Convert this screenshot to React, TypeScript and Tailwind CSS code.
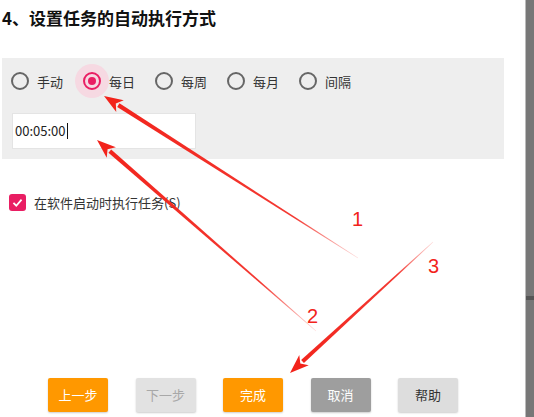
import React from 'react';

const font = { fontFamily: '"Noto Sans CJK SC", "Noto Sans", sans-serif' };

type ArrowProps = { id: string; tail: [number, number]; tip: [number, number]; width?: number };

const Arrow: React.FC<ArrowProps> = ({ id, tail, tip, width = 4.2 }) => {
  const [x1, y1] = tail;
  const [x2, y2] = tip;
  const len = Math.hypot(x2 - x1, y2 - y1);
  const dx = (x2 - x1) / len;
  const dy = (y2 - y1) / len;
  const nx = -dy;
  const ny = dx;
  const headLen = 17;
  const headHalf = 7;
  const bx = x2 - dx * headLen;
  const by = y2 - dy * headLen;
  const w = width / 2;
  const shaft = [
    [x1 + nx * 0.3, y1 + ny * 0.3],
    [bx + nx * w, by + ny * w],
    [bx - nx * w, by - ny * w],
    [x1 - nx * 0.3, y1 - ny * 0.3],
  ];
  const head = [
    [x2, y2],
    [bx + nx * headHalf - dx * 2, by + ny * headHalf - dy * 2],
    [bx + dx * 3, by + dy * 3],
    [bx - nx * headHalf - dx * 2, by - ny * headHalf - dy * 2],
  ];
  const pts = (p: number[][]) => p.map((q) => q.join(',')).join(' ');
  return (
    <>
      <defs>
        <linearGradient id={id} gradientUnits="userSpaceOnUse" x1={x1} y1={y1} x2={x2} y2={y2}>
          <stop offset="0" stopColor="#f2231b" stopOpacity="0.15" />
          <stop offset="0.25" stopColor="#f2231b" stopOpacity="0.9" />
          <stop offset="1" stopColor="#f2231b" stopOpacity="1" />
        </linearGradient>
      </defs>
      <polygon points={pts(shaft)} fill={`url(#${id})`} />
      <polygon points={pts(head)} fill="#f2231b" />
    </>
  );
};

const Radio: React.FC<{ label: string; checked?: boolean }> = ({ label, checked }) => (
  <label className="flex items-center gap-[8px]">
    <span className="relative flex h-[18px] w-[18px] items-center justify-center">
      {checked && <span className="absolute -inset-[8px] rounded-full bg-[#f6d9e2]" />}
      <span
        className={`relative flex h-[18px] w-[18px] items-center justify-center rounded-full border-2 ${
          checked ? 'border-[#e91e63]' : 'border-[#666666]'
        }`}
      >
        {checked && <span className="h-[8px] w-[8px] rounded-full bg-[#e91e63]" />}
      </span>
    </span>
    <span className="text-[13px] leading-none text-[#333333]">{label}</span>
  </label>
);

const Button: React.FC<{ label: string; className: string }> = ({ label, className }) => (
  <button
    className={`flex h-[34px] w-[60px] items-center justify-center rounded-[2px] text-[13px] shadow-[0_1px_2px_rgba(0,0,0,0.2)] ${className}`}
  >
    {label}
  </button>
);

export default function App() {
  return (
    <div className="relative flex h-[417px] w-[534px] overflow-hidden bg-white" style={font}>
      <div className="flex flex-1 flex-col">
        <h1 className="ml-[2px] mt-[7px] text-[17px] font-bold leading-[22px] text-[#111111]">
          4、设置任务的自动执行方式
        </h1>

        <div className="ml-[2px] mt-[29px] w-[502px] bg-[#eeeeee] pb-[10px] pt-[14px]">
          <div className="flex items-center gap-[20px] pl-[9px]">
            <Radio label="手动" />
            <Radio label="每日" checked />
            <Radio label="每周" />
            <Radio label="每月" />
            <Radio label="间隔" />
          </div>
          <div className="ml-[10px] mt-[23px] flex h-[36px] w-[184px] items-center border border-[#e4e4e4] bg-white pl-[2px] text-[13px] text-[#222222]">
            00:05:00
            <span className="ml-[1px] h-[16px] w-[1px] bg-[#111111]" />
          </div>
        </div>

        <div className="ml-[9px] mt-[35px] flex items-center gap-[8px]">
          <span className="flex h-[17px] w-[17px] items-center justify-center rounded-[3px] bg-[#e91e63]">
            <svg viewBox="0 0 16 16" className="h-[13px] w-[13px]" fill="none" stroke="white" strokeWidth="2.2">
              <path d="M3 8.5 L6.5 12 L13 4.5" />
            </svg>
          </span>
          <span className="text-[13px] leading-none text-[#333333]">在软件启动时执行任务(S)</span>
        </div>

        <div className="mt-auto mb-[5px] flex gap-[27.5px] pl-[48px]">
          <Button label="上一步" className="bg-[#ff9800] text-white" />
          <Button label="下一步" className="bg-[#e2e2e2] text-[#a8a8a8]" />
          <Button label="完成" className="bg-[#ff9800] text-white" />
          <Button label="取消" className="bg-[#9e9e9e] text-white" />
          <Button label="帮助" className="bg-[#dddddd] text-[#333333]" />
        </div>
      </div>

      <div className="relative w-[9px] border-l border-[#bbbbbb] bg-[#777777]">
        <div className="absolute left-0 top-[296px] h-[4px] w-full bg-[#555555]" />
      </div>

      <svg className="pointer-events-none absolute inset-0" width="534" height="417">
        <Arrow id="a1" tail={[358, 258]} tip={[104, 96]} />
        <Arrow id="a2" tail={[316, 331]} tip={[97, 140]} />
        <Arrow id="a3" tail={[433, 242]} tip={[290, 373]} />
        <text x="352" y="226" fontSize="20" fill="#f2231b" fontFamily="Liberation Sans, sans-serif">1</text>
        <text x="307" y="323" fontSize="20" fill="#f2231b" fontFamily="Liberation Sans, sans-serif">2</text>
        <text x="428" y="273" fontSize="20" fill="#f2231b" fontFamily="Liberation Sans, sans-serif">3</text>
      </svg>
    </div>
  );
}
